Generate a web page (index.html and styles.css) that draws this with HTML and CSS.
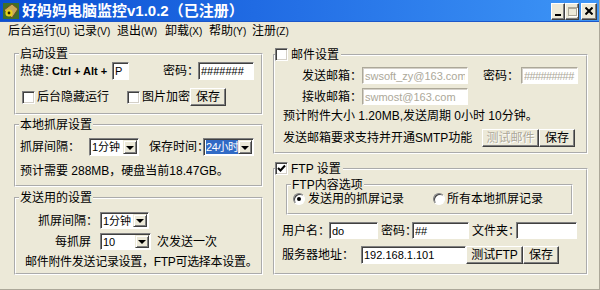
FILE: index.html
```html
<!DOCTYPE html>
<html lang="zh-CN">
<head>
    <meta charset="UTF-8">
    <title>好妈妈电脑监控</title>
    <link rel="stylesheet" href="styles.css">
</head>
<body>
<div class="window">
    <div class="titlebar">
        <svg class="app-icon" width="16" height="16" viewBox="0 0 16 16">
            <rect x="0" y="0" width="16" height="16" fill="#3f6f2a"/>
            <polygon points="1,7 9,1 15,6 9,15" fill="#c8a85c" stroke="#6b4f1c" stroke-width="1"/>
            <circle cx="6" cy="10" r="3.6" fill="#e6d21a"/>
            <circle cx="6" cy="10" r="1.4" fill="#2a2008"/>
        </svg>
        <span class="title">好妈妈电脑监控v1.0.2（已注册）</span>
        <div class="caption-btns">
            <span class="cap-btn cap-min"><i></i></span>
            <span class="cap-btn cap-max"><i></i></span>
            <span class="cap-btn cap-close">
                <svg width="8" height="8" viewBox="0 0 8 8"><path d="M0.5 0.5 L7.5 7.5 M7.5 0.5 L0.5 7.5" stroke="#000" stroke-width="2"/></svg>
            </span>
        </div>
    </div>

    <div class="menubar">
        <span>后台运行<small>(U)</small></span>
        <span>记录<small>(V)</small></span>
        <span>退出<small>(W)</small></span>
        <span>卸载<small>(X)</small></span>
        <span>帮助<small>(Y)</small></span>
        <span>注册<small>(Z)</small></span>
    </div>

    <div class="client">
        <div class="col-left">
            <fieldset class="group g-start">
                <legend>启动设置</legend>
                <div class="row h18 mt2">
                    <span class="hotkey-label">热键：<b class="keys">Ctrl + Alt +</b></span>
                    <input class="field hk-field" type="text" value="P">
                    <span class="pwd-label">密码：</span>
                    <input class="field pwd-field" type="text" value="#######">
                </div>
                <div class="row h18 mt8">
                    <span class="check ml3"></span>
                    <span class="ml2">后台隐藏运行</span>
                    <span class="check ml18"></span>
                    <span class="ml2">图片加密</span>
                    <button class="btn btn-save ml30">保存</button>
                </div>
            </fieldset>

            <fieldset class="group g-local">
                <legend>本地抓屏设置</legend>
                <div class="row h18 mt7">
                    <span class="local-int-label">抓屏间隔：</span>
                    <span class="combo local-int"><span class="combo-text">1分钟</span><span class="combo-btn"></span></span>
                    <span class="keep-label">保存时间：</span>
                    <span class="combo keep-time"><span class="combo-text"><span class="sel">24小时</span></span><span class="combo-btn"></span></span>
                </div>
                <div class="row h18 mt6">
                    <span class="ml1">预计需要 288MB，硬盘当前18.47GB。</span>
                </div>
            </fieldset>

            <fieldset class="group g-send">
                <legend>发送用的设置</legend>
                <div class="row h17 mt8">
                    <span class="send-int-label">抓屏间隔：</span>
                    <span class="combo send-int"><span class="combo-text">1分钟</span><span class="combo-btn"></span></span>
                </div>
                <div class="row h17 mt4">
                    <span class="every-label">每抓屏</span>
                    <span class="combo every"><span class="combo-text">10</span><span class="combo-btn"></span></span>
                    <span class="ml6">次发送一次</span>
                </div>
                <div class="row h16 mt4">
                    <span class="note">邮件附件发送记录设置，FTP可选择本设置。</span>
                </div>
            </fieldset>
        </div>

        <div class="col-right">
            <fieldset class="group g-mail">
                <legend class="check-legend"><span class="check"></span><span class="ml3">邮件设置</span></legend>
                <div class="row h17 mt6">
                    <span class="mail-label">发送邮箱：</span>
                    <input class="field mail-field" type="text" value="swsoft_zy@163.com" disabled>
                    <span class="mail-pwd-label">密码：</span>
                    <input class="field mail-pwd" type="text" value="#########" disabled>
                </div>
                <div class="row h17 mt4">
                    <span class="mail-label">接收邮箱：</span>
                    <input class="field mail-field" type="text" value="swmost@163.com" disabled>
                </div>
                <div class="row h16 mt3">
                    <span class="ml5">预计附件大小 1.20MB,发送周期 0小时 10分钟。</span>
                </div>
                <div class="row h18 mt5">
                    <span class="smtp-label">发送邮箱要求支持并开通SMTP功能</span>
                    <button class="btn btn-test" disabled>测试邮件</button>
                    <button class="btn btn-save ml2">保存</button>
                </div>
            </fieldset>

            <fieldset class="group g-ftp">
                <legend class="check-legend"><span class="check checked"><svg width="9" height="9" viewBox="0 0 9 9"><path d="M1 4 L3.5 6.5 L8 1.5" fill="none" stroke="#000" stroke-width="2"/></svg></span><span class="ml3">FTP 设置</span></legend>
                <fieldset class="group g-ftp-opts">
                    <legend>FTP内容选项</legend>
                    <div class="row h14 mt1">
                        <span class="radio on ml2"></span>
                        <span class="ml3">发送用的抓屏记录</span>
                        <span class="radio ml29"></span>
                        <span class="ml2">所有本地抓屏记录</span>
                    </div>
                </fieldset>
                <div class="row h17 mt7">
                    <span class="user-label">用户名：</span>
                    <input class="field user-field" type="text" value="do">
                    <span class="ftp-pwd-label">密码：</span>
                    <input class="field ftp-pwd" type="text" value="##">
                    <span class="dir-label">文件夹：</span>
                    <input class="field dir-field" type="text" value="">
                </div>
                <div class="row h18 mt7">
                    <span class="server-label">服务器地址：</span>
                    <input class="field server-field" type="text" value="192.168.1.101">
                    <button class="btn btn-test ml16">测试FTP</button>
                    <button class="btn btn-save ml2">保存</button>
                </div>
            </fieldset>
        </div>
    </div>
</div>
</body>
</html>
```

FILE: styles.css
```css
html, body {
    margin: 0;
    padding: 0;
}
body {
    width: 600px;
    height: 290px;
    overflow: hidden;
    background-color: #ece9d8;
    font-family: "Liberation Sans", "Noto Sans CJK SC", sans-serif;
    font-size: 12px;
    color: #000;
}
.window {
    width: 600px;
    height: 290px;
    box-sizing: border-box;
    border-right: 1px solid #aca899;
    border-bottom: 1px solid #aca899;
    background-color: #ece9d8;
}

/* title bar */
.titlebar {
    height: 22px;
    display: flex;
    align-items: center;
    padding: 0 2px 0 3px;
    background: linear-gradient(to right, #0a4fd2 0%, #2470e6 50%, #3d95f6 100%);
    box-shadow: inset 0 -1px 0 #1d57c9;
}
.app-icon {
    flex: none;
    margin-right: 3px;
}
.title {
    color: #fff;
    font-weight: bold;
    font-size: 15px;
    line-height: 22px;
    white-space: nowrap;
}
.caption-btns {
    margin-left: auto;
    display: flex;
}
.cap-btn {
    width: 14px;
    height: 17px;
    box-sizing: border-box;
    background-color: #ece9d8;
    border: 1px solid;
    border-color: #fff #404040 #404040 #fff;
    box-shadow: inset -1px -1px 0 #808080;
    display: flex;
    align-items: center;
    justify-content: center;
}
.cap-min i {
    width: 6px;
    height: 2px;
    background: #000;
    margin-top: 7px;
}
.cap-max i {
    width: 7px;
    height: 6px;
    border: 1px solid #aca899;
    border-top-width: 2px;
    box-shadow: 1px 1px 0 #fff;
}
.cap-close {
    width: 16px;
    margin-left: 2px;
}

/* menu */
.menubar {
    height: 19px;
    line-height: 19px;
    padding-left: 8px;
    display: grid;
    grid-template-columns: 65px 44px 48px 44px 43px auto;
    white-space: nowrap;
}
.menubar small {
    font-size: 10px;
}

/* client area */
.client {
    display: flex;
    padding: 7px 0 0 14px;
    gap: 10px;
}
.col-left {
    width: 249px;
    display: flex;
    flex-direction: column;
}
.col-right {
    width: 315px;
    display: flex;
    flex-direction: column;
}

.group {
    margin: 0;
    padding: 0 3px;
    border: 2px groove #fff;
    box-sizing: border-box;
    min-width: 0;
}
.group legend {
    padding: 0 1px;
    height: 12px;
    line-height: 12px;
    white-space: nowrap;
}
.group legend.check-legend {
    display: flex;
    align-items: center;
    height: 13px;
    margin-left: -3px;
    padding: 0 2px 0 0;
}
.g-start { height: 67px; }
.g-local { height: 68px; margin-top: 4px; }
.g-send { height: 83px; margin-top: 5px; }
.g-mail { height: 106px; }
.g-ftp { height: 113px; margin-top: 8px; }
.g-ftp-opts {
    height: 36px;
    width: 287px;
    margin: 4px 0 0 8px;
}

.row {
    display: flex;
    align-items: center;
    line-height: 14px;
    white-space: nowrap;
}
.h14 { height: 14px; }
.h16 { height: 16px; }
.h17 { height: 17px; }
.h18 { height: 18px; }
.mt1 { margin-top: 1px; }
.mt2 { margin-top: 2px; }
.mt3 { margin-top: 3px; }
.mt4 { margin-top: 4px; }
.mt5 { margin-top: 5px; }
.mt6 { margin-top: 6px; }
.mt7 { margin-top: 7px; }
.mt8 { margin-top: 8px; }
.ml1 { margin-left: 1px; }
.ml2 { margin-left: 2px; }
.ml3 { margin-left: 3px; }
.ml5 { margin-left: 5px; }
.ml6 { margin-left: 6px; }
.ml16 { margin-left: 16px; }
.ml18 { margin-left: 18px; }
.ml29 { margin-left: 29px; }
.ml30 { margin-left: 30px; }

/* controls */
.field {
    box-sizing: border-box;
    height: 100%;
    margin: 0;
    padding: 0 2px;
    background: #fff;
    border: 1px solid;
    border-color: #808080 #fff #fff #808080;
    box-shadow: inset 1px 1px 0 #404040;
    font-family: "Liberation Sans", sans-serif;
    font-size: 11px;
    color: #000;
    outline: none;
}
.field:disabled {
    color: #aca899;
    border-color: #aca899 #fff #fff #aca899;
    box-shadow: inset 1px 1px 0 #d4d0c8;
    background: #fff;
}
.mail-pwd {
    letter-spacing: -0.6px;
}
.btn {
    box-sizing: border-box;
    height: 18px;
    margin: 0;
    padding: 0;
    background-color: #ece9d8;
    border: 1px solid;
    border-color: #fff #404040 #404040 #fff;
    box-shadow: inset -1px -1px 0 #808080;
    font-family: "Liberation Sans", "Noto Sans CJK SC", sans-serif;
    font-size: 12px;
    line-height: 14px;
    color: #000;
}
.btn:disabled {
    color: #aca899;
    text-shadow: 1px 1px 0 #fff;
}
.btn-save { width: 36px; }
.btn-test { width: 57px; }

.check {
    flex: none;
    width: 13px;
    height: 13px;
    box-sizing: border-box;
    background: #fff;
    border: 1px solid;
    border-color: #808080 #fff #fff #808080;
    box-shadow: inset 1px 1px 0 #404040, inset -1px -1px 0 #d4d0c8;
    display: flex;
    align-items: center;
    justify-content: center;
}
.radio {
    flex: none;
    width: 12px;
    height: 12px;
    box-sizing: border-box;
    border-radius: 50%;
    background: #fff;
    border: 1px solid;
    border-color: #808080 #fff #fff #808080;
    box-shadow: inset 1px 1px 0 #404040;
    display: flex;
    align-items: center;
    justify-content: center;
}
.radio.on::after {
    content: "";
    width: 4px;
    height: 4px;
    border-radius: 50%;
    background: #000;
}

.combo {
    box-sizing: border-box;
    height: 100%;
    display: flex;
    background: #fff;
    border: 1px solid;
    border-color: #808080 #fff #fff #808080;
    box-shadow: inset 1px 1px 0 #404040;
    padding: 1px;
    font-size: 11px;
}
.combo-text {
    flex: 1;
    min-width: 0;
    display: flex;
    align-items: center;
    padding-left: 1px;
    overflow: hidden;
}
.combo-btn {
    flex: none;
    width: 14px;
    box-sizing: border-box;
    background: #ece9d8;
    border: 1px solid;
    border-color: #ece9d8 #404040 #404040 #ece9d8;
    box-shadow: inset 1px 1px 0 #fff, inset -1px -1px 0 #808080;
    display: flex;
    align-items: center;
    justify-content: center;
}
.combo-btn::after {
    content: "";
    width: 0;
    height: 0;
    border-top: 4px solid #000;
    border-left: 4px solid transparent;
    border-right: 4px solid transparent;
    margin-top: 1px;
}
.sel {
    background: #316ac5;
    color: #fff;
    letter-spacing: -0.4px;
}

/* left column pieces */
.hotkey-label { margin-left: 1px; width: 92px; flex: none; }
.keys { font-size: 11px; margin-left: -4px; }
.hk-field { width: 17px; }
.pwd-label { margin-left: 34px; width: 35px; flex: none; }
.pwd-field { width: 56px; }
.local-int-label { margin-left: 1px; width: 69px; flex: none; }
.local-int { width: 50px; }
.keep-label { margin-left: 10px; width: 54px; flex: none; }
.keep-time { width: 51px; }
.send-int-label { margin-left: 19px; width: 62px; flex: none; }
.send-int { width: 49px; }
.every-label { margin-left: 36px; width: 45px; flex: none; }
.every { width: 51px; }
.note { margin-left: 6px; letter-spacing: -0.3px; }

/* right column pieces */
.mail-label { margin-left: 24px; width: 60px; flex: none; }
.mail-field { width: 106px; }
.mail-pwd-label { margin-left: 15px; width: 38px; flex: none; }
.mail-pwd { width: 57px; }
.smtp-label { margin-left: 5px; width: 199px; flex: none; }
.user-label { margin-left: 4px; width: 47px; flex: none; }
.user-field { width: 49px; }
.ftp-pwd-label { margin-left: 3px; width: 31px; flex: none; }
.ftp-pwd { width: 57px; }
.dir-label { margin-left: 3px; width: 44px; flex: none; }
.dir-field { width: 61px; }
.server-label { margin-left: 4px; width: 79px; flex: none; }
.server-field { width: 105px; }
```
